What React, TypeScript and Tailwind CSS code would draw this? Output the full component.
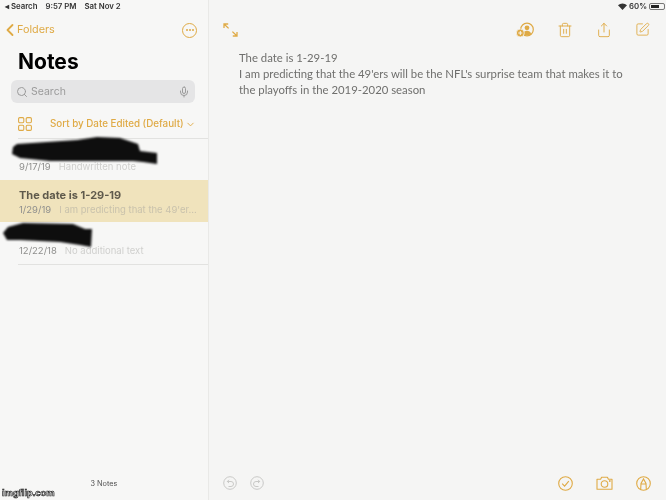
import React from "react";
import { ChevronDown, ChevronLeft, Mic, Search, Share, SquarePen, Trash2 } from "lucide-react";

const amber = "#dfaa45";

function NoteRow({ date, preview, title, selected }: { date: string; preview: string; title?: string; selected?: boolean }) {
  return (
    <div className={selected ? "h-[42px] bg-[#f0e3bc] pl-[19px] pt-[8px]" : "h-[42px] pl-[19px] pt-[22px]"}>
      {title && <div className="text-[11px] leading-[15px] font-bold text-[#5f5a4c]">{title}</div>}
      <div className="flex gap-[8px] text-[9.5px] leading-[13px] whitespace-nowrap">
        <span className="text-[#8f8f8d]">{date}</span>
        <span className={selected ? "text-[#c9c2ac]" : "text-[#d0d0ce]"}>{preview}</span>
      </div>
    </div>
  );
}

function GridIcon() {
  return (
    <svg width="14" height="14" viewBox="0 0 14 14" fill="none" stroke={amber} strokeWidth="1.1">
      <rect x="0.6" y="0.6" width="5.2" height="5.2" rx="1.2" />
      <rect x="8.2" y="0.6" width="5.2" height="5.2" rx="1.2" />
      <rect x="0.6" y="8.2" width="5.2" height="5.2" rx="1.2" />
      <rect x="8.2" y="8.2" width="5.2" height="5.2" rx="1.2" />
    </svg>
  );
}

function ExpandIcon() {
  return (
    <svg width="15" height="14" viewBox="0 0 15 14" fill="none" stroke={amber} strokeWidth="1.3">
      <path d="M1 5V1h4.2M1 1l4.6 4.4M14 9v4H9.8M14 13L9.4 8.6" />
    </svg>
  );
}

function CollabIcon() {
  return (
    <svg width="18" height="16" viewBox="0 0 18 16" fill="none">
      <circle cx="11" cy="7.5" r="6.3" stroke={amber} strokeWidth="1.2" />
      <circle cx="11" cy="5.8" r="2.4" fill={amber} />
      <path d="M6.8 12c.6-2.4 2.4-3.2 4.2-3.2s3.6.8 4.2 3.2c-2 1.7-6.4 1.7-8.4 0z" fill={amber} />
      <circle cx="4.3" cy="11" r="4" fill={amber} stroke="#f5f5f4" strokeWidth="0.8" />
      <path d="M4.3 9v4M2.3 11h4" stroke="#f5f5f4" strokeWidth="1" />
    </svg>
  );
}

function CameraIcon() {
  return (
    <svg width="17" height="14" viewBox="0 0 17 14" fill="none" stroke={amber} strokeWidth="1.1">
      <path d="M1 3.2h3.6l1-2h5.8l1 2H16v10H1z" strokeLinejoin="round" />
      <circle cx="8.5" cy="8" r="3.3" />
      <circle cx="13.8" cy="5" r="0.4" />
    </svg>
  );
}

function MarkupIcon() {
  return (
    <svg width="15" height="15" viewBox="0 0 15 15" fill="none" stroke={amber} strokeWidth="1.1">
      <circle cx="7.5" cy="7.5" r="6.8" />
      <path d="M4.7 13.4L5 7.5l2.5-4.5L10 7.5l.3 5.9M5 8h5" />
    </svg>
  );
}

function CheckIcon() {
  return (
    <svg width="15" height="15" viewBox="0 0 15 15" fill="none" stroke={amber} strokeWidth="1.1">
      <circle cx="7.5" cy="7.5" r="6.8" />
      <path d="M4.2 7.6l2.4 2.5 4.2-5" />
    </svg>
  );
}

function UndoIcon({ flip }: { flip?: boolean }) {
  return (
    <svg width="14" height="14" viewBox="0 0 14 14" fill="none" stroke="#c4c4c2" strokeWidth="0.9" className={flip ? "-scale-x-100" : ""}>
      <circle cx="7" cy="7" r="6.3" />
      <path d="M6 3.8L4.3 5.5 6 7M4.3 5.5H8a2.4 2.4 0 0 1 0 5H5.5" />
    </svg>
  );
}

export default function App() {
  return (
    <div className="relative flex h-[500px] w-[666px] overflow-hidden bg-[#f5f5f4] font-['Inter',sans-serif] [filter:blur(0.35px)]">
      <aside className="flex w-[209px] shrink-0 flex-col border-r border-[#e9e9e7] bg-[#f7f7f6]">
        <div className="flex h-[13px] items-center pl-[5px] text-[7.8px] font-semibold text-[#333333] whitespace-nowrap">
          <span className="mr-[8px]">◂ Search</span>
          <span className="mr-[8px]">9:57 PM</span>
          <span>Sat Nov 2</span>
        </div>
        <div className="flex h-[31px] items-center justify-between pr-[11px] pt-[3px]">
          <div className="flex items-center text-[10.8px] text-[#dfaa45]">
            <ChevronLeft size={20} strokeWidth={2.2} className="-mr-[3px]" />
            Folders
          </div>
          <div className="flex h-[15px] w-[15px] items-center justify-center gap-[1px] rounded-full border border-[#dfaa45]">
            <i className="h-[2px] w-[2px] rounded-full bg-[#dfaa45]" />
            <i className="h-[2px] w-[2px] rounded-full bg-[#dfaa45]" />
            <i className="h-[2px] w-[2px] rounded-full bg-[#dfaa45]" />
          </div>
        </div>
        <h1 className="h-[36px] pl-[18px] pt-[4px] text-[21px] leading-[28px] font-bold text-black">Notes</h1>
        <div className="ml-[11px] flex h-[23px] w-[184px] items-center rounded-[6px] bg-[#e5e5e6] px-[5px] text-[10.5px] text-[#9b9b9b]">
          <Search size={12} className="mr-[3px]" />
          <span className="flex-1">Search</span>
          <Mic size={12} />
        </div>
        <div className="mt-[8px] flex h-[27px] items-center pb-[1px] pl-[18px] pr-[12px] text-[#dfaa45]">
          <GridIcon />
          <span className="ml-[18px] text-[9.8px] font-medium whitespace-nowrap">Sort by Date Edited (Default)</span>
          <ChevronDown size={11} className="ml-[1px]" />
        </div>
        <div className="ml-[18px] h-px bg-[#e2e2e0]" />
        <div className="-mt-px">
          <NoteRow date="9/17/19" preview="Handwritten note" />
        </div>
        <NoteRow selected date="1/29/19" preview="I am predicting that the 49'er..." title="The date is 1-29-19" />
        <NoteRow date="12/22/18" preview="No additional text" />
        <div className="ml-[18px] h-px bg-[#e2e2e0]" />
        <div className="mt-auto pb-[10px] text-center text-[7.3px] text-[#555555]">3 Notes</div>
      </aside>

      <main className="flex flex-1 flex-col">
        <div className="flex h-[13px] items-center justify-end pr-[1px] text-[7.8px] font-semibold text-[#333333]">
          <svg width="9" height="7" viewBox="0 0 9 7" className="mr-[2px]"><path d="M4.5 7L0 2.2a6.5 6.5 0 0 1 9 0z" fill="#333" /></svg>
          60%
          <span className="ml-[2px] flex h-[7px] w-[16px] rounded-[2px] border border-[#777] p-px"><i className="w-[8px] bg-[#222]" /></span>
        </div>
        <div className="flex h-[31px] items-center pl-[14px] pr-[16px] pt-[2px]">
          <ExpandIcon />
          <div className="ml-auto flex items-center gap-[23px]">
            <CollabIcon />
            <Trash2 size={16} strokeWidth={1.4} color={amber} />
            <Share size={16} strokeWidth={1.4} color={amber} />
            <SquarePen size={15} strokeWidth={1.4} color={amber} />
          </div>
        </div>
        <div className="pl-[30px] pt-[6px] font-['Lato',sans-serif] text-[11.35px] leading-[16px] text-[#6f6f6d] whitespace-nowrap">
          <p>The date is 1-29-19</p>
          <p>I am predicting that the 49'ers will be the NFL's surprise team that makes it to</p>
          <p>the playoffs in the 2019-2020 season</p>
        </div>
        <div className="mt-auto flex h-[34px] items-center pl-[14px] pr-[15px]">
          <div className="flex gap-[13px]">
            <UndoIcon />
            <UndoIcon flip />
          </div>
          <div className="ml-auto flex items-center gap-[23px]">
            <CheckIcon />
            <CameraIcon />
            <MarkupIcon />
          </div>
        </div>
      </main>

      {/* redaction scribbles over the note titles */}
      <svg className="absolute left-0 top-[130px] [filter:blur(0.8px)]" width="170" height="125" viewBox="0 130 170 125" fill="#0e0e0e">
        <path d="M17 144L77 140 97 137 120 138 138 144 140 151 157 153 157 164 143 162 133 161 50 161 20 158 12 154 13 147z" />
        <path d="M8 227L23 223 73 224 85 229 92 229 91 247 80 245 60 242 20 240 7 240 3 233z" />
      </svg>

      <div className="absolute bottom-[2px] left-[2px] font-['Liberation_Sans',sans-serif] text-[9.4px] leading-[10px] font-bold text-white [-webkit-text-stroke:0.7px_#222]">imgflip.com</div>
    </div>
  );
}
